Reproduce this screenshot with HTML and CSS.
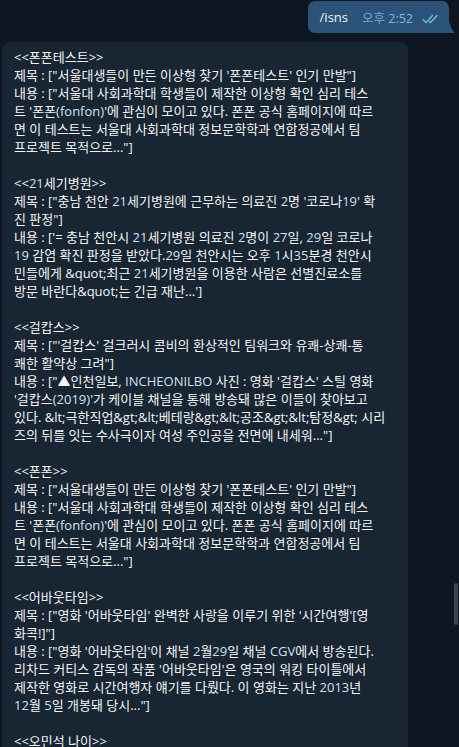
FILE: index.html
```html
<!DOCTYPE html>
<html lang="ko">
<head>
<meta charset="utf-8">
<title>Chat</title>
<link rel="stylesheet" href="styles.css">
</head>
<body>
<div class="chat">
  <div class="row out">
    <div class="bubble-out">
      <span class="cmd">/isns</span>
      <span class="meta">
        <span class="time">오후 <span class="lat">2:52</span></span>
        <svg class="checks" width="18" height="10" viewBox="0 0 18 10">
          <path d="M1 5.5 L4.2 8.5 L10.5 1.5" fill="none" stroke="#6fb6f0" stroke-width="1.5" stroke-linecap="round" stroke-linejoin="round"/>
          <path d="M7.6 7.6 L8.6 8.5 L15 1.5" fill="none" stroke="#6fb6f0" stroke-width="1.5" stroke-linecap="round" stroke-linejoin="round"/>
        </svg>
      </span>
      <svg class="tail" width="8" height="10" viewBox="0 0 8 10"><path d="M0 0 L0 10 L7 10 Q3 7 2 0 Z" fill="#2b5278"/></svg>
    </div>
  </div>
  <div class="row in">
    <div class="bubble-in">
      <div class="sec">&lt;&lt;폰폰테스트&gt;&gt;<br>제목 : ["서울대생들이 만든 이상형 찾기 '폰폰테스트' 인기 만발"]<br>내용 : ["서울대 사회과학대 학생들이 제작한 이상형 확인 심리 테스<br>트 '폰폰<span class="lat">(fonfon)</span>'에 관심이 모이고 있다. 폰폰 공식 홈페이지에 따르<br>면 이 테스트는 서울대 사회과학대 정보문학학과 연합정공에서 팀<br>프로젝트 목적으로..."]</div>
      <div class="sec">&lt;&lt;<span class="lat">21</span>세기병원&gt;&gt;<br>제목 : ["충남 천안 <span class="lat">21</span>세기병원에 근무하는 의료진 <span class="lat">2</span>명 '코로나<span class="lat">19</span>' 확<br>진 판정"]<br>내용 : ['= 충남 천안시 <span class="lat">21</span>세기병원 의료진 <span class="lat">2</span>명이 <span class="lat">27</span>일, <span class="lat">29</span>일 코로나<br><span class="lat">19</span> 감염 확진 판정을 받았다.<span class="lat">29</span>일 천안시는 오후 <span class="lat">1</span>시<span class="lat">35</span>분경 천안시<br>민들에게 &amp;quot;최근 <span class="lat">21</span>세기병원을 이용한 사람은 선별진료소를<br>방문 바란다&amp;quot;는 긴급 재난...']</div>
      <div class="sec">&lt;&lt;걸캅스&gt;&gt;<br>제목 : ["'걸캅스' 걸크러시 콤비의 환상적인 팀워크와 유쾌-상쾌-통<br>쾌한 활약상 그려"]<br>내용 : ["▲인천일보, <span class="lat">INCHEONILBO</span> 사진 : 영화 '걸캅스' 스틸 영화<br>'걸캅스<span class="lat">(2019)</span>'가 케이블 채널을 통해 방송돼 많은 이들이 찾아보고<br>있다. &amp;lt;극한직업&amp;gt;&amp;lt;베테랑&amp;gt;&amp;lt;공조&amp;gt;&amp;lt;탐정&amp;gt; 시리<br>즈의 뒤를 잇는 수사극이자 여성 주인공을 전면에 내세워..."]</div>
      <div class="sec">&lt;&lt;폰폰&gt;&gt;<br>제목 : ["서울대생들이 만든 이상형 찾기 '폰폰테스트' 인기 만발"]<br>내용 : ["서울대 사회과학대 학생들이 제작한 이상형 확인 심리 테스<br>트 '폰폰<span class="lat">(fonfon)</span>'에 관심이 모이고 있다. 폰폰 공식 홈페이지에 따르<br>면 이 테스트는 서울대 사회과학대 정보문학학과 연합정공에서 팀<br>프로젝트 목적으로..."]</div>
      <div class="sec">&lt;&lt;어바웃타임&gt;&gt;<br>제목 : ["영화 '어바웃타임' 완벽한 사랑을 이루기 위한 '시간여행'[영<br>화콕!]"]<br>내용 : ["영화 '어바웃타임'이 채널 <span class="lat">2</span>월<span class="lat">29</span>일 채널 <span class="lat">CGV</span>에서 방송된다.<br>리차드 커티스 감독의 작품 '어바웃타임'은 영국의 워킹 타이틀에서<br>제작한 영화로 시간여행자 얘기를 다뤘다. 이 영화는 지난 <span class="lat">2013</span>년<br><span class="lat">12</span>월 <span class="lat">5</span>일 개봉돼 당시..."]</div>
      <div class="sec">&lt;&lt;오민석 나이&gt;&gt;</div>
    </div>
  </div>
</div>
<div class="scroll-thumb"></div>
</body>
</html>
```

FILE: styles.css
```css
html, body {
  margin: 0;
  padding: 0;
  background: #0e1621;
  height: 100%;
  overflow: hidden;
}
body {
  font-family: "Open Sans", "Noto Sans CJK KR", sans-serif;
  font-size: 13px;
  color: #f5f5f5;
}
.chat {
  display: flex;
  flex-direction: column;
  gap: 9px;
  padding-top: 1px;
}
.row {
  display: flex;
}
.row.out {
  justify-content: flex-end;
  padding-right: 10px;
}
.row.in {
  padding-left: 2px;
}
.bubble-out {
  position: relative;
  background: #2b5278;
  border-radius: 7px 7px 0 7px;
  height: 32px;
  box-sizing: border-box;
  padding: 0 9px 0 12px;
  display: flex;
  align-items: center;
  gap: 14px;
  line-height: 18px;
}
.cmd {
  color: #f5f5f5;
  margin-top: -1px;
}
.meta {
  display: flex;
  align-items: center;
  gap: 9px;
  margin-top: 3px;
}
.time {
  font-size: 12.5px;
  color: #7da8d3;
}
.time .lat {
  color: #8bb4dc;
}
.checks {
  display: block;
}
.tail {
  position: absolute;
  right: -7px;
  bottom: 0;
  display: block;
}
.bubble-in {
  background: #182533;
  border-radius: 8px;
  width: 406px;
  box-sizing: border-box;
  padding: 6px 12px 40px 12px;
  line-height: 18px;
  display: flex;
  flex-direction: column;
  gap: 18px;
  white-space: nowrap;
}
.lat {
  color: #cfe3f4;
}
.scroll-thumb {
  position: fixed;
  right: 1px;
  top: 583px;
  width: 4px;
  height: 42px;
  border-radius: 2px;
  background: #3a4350;
}
```
